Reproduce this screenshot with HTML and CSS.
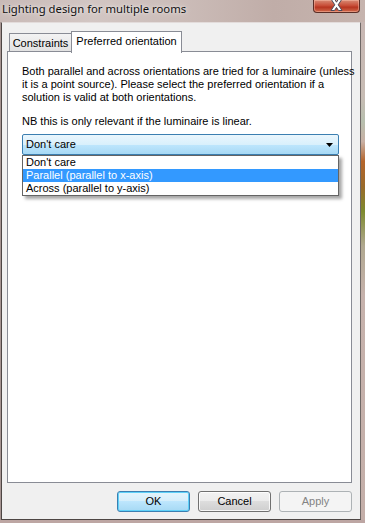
FILE: index.html
```html
<!DOCTYPE html>
<html>
<head>
<meta charset="utf-8">
<link rel="stylesheet" href="styles.css">
</head>
<body>
<div class="window">
  <div class="titlebar">
    <span class="title">Lighting design for multiple rooms</span>
    <div class="close">
      <svg width="47" height="13" viewBox="0 0 47 13">
        <path d="M18 -1 L21.5 -1 L23.5 2.2 L25.5 -1 L29 -1 L25.2 4.8 L29 10.5 L25.5 10.5 L23.5 7.4 L21.5 10.5 L18 10.5 L21.8 4.8 Z" fill="#fff" stroke="#4a4a5a" stroke-width="1"/>
      </svg>
    </div>
  </div>
  <div class="main">
    <div class="frame-left"></div>
    <div class="client">
      <div class="tabs">
        <div class="tab">Constraints</div>
        <div class="tab selected">Preferred orientation</div>
      </div>
      <div class="panel">
        <p class="desc">Both parallel and across orientations are tried for a luminaire (unless<br>it is a point source). Please select the preferred orientation if a<br>solution is valid at both orientations.</p>
        <p class="nb">NB this is only relevant if the luminaire is linear.</p>
        <div class="combo-wrap">
          <div class="combo">
            <span class="combo-text">Don't care</span>
            <svg class="arrow" width="7" height="4" viewBox="0 0 7 4"><path d="M0 0 H7 L3.5 4 Z" fill="#000"/></svg>
          </div>
          <ul class="list">
            <li class="item">Don't care</li>
            <li class="item active">Parallel (parallel to x-axis)</li>
            <li class="item">Across (parallel to y-axis)</li>
          </ul>
        </div>
      </div>
      <div class="buttons">
        <div class="btn default">OK</div>
        <div class="btn">Cancel</div>
        <div class="btn disabled">Apply</div>
      </div>
    </div>
    <div class="frame-right"></div>
  </div>
  <div class="frame-bottom"></div>
</div>
</body>
</html>
```
FILE: styles.css
```css
html, body {
  margin: 0;
  padding: 0;
}
body {
  width: 365px;
  height: 523px;
  overflow: hidden;
  font-family: "Liberation Sans", Arial, sans-serif;
  font-size: 11px;
  color: #000;
}
.window {
  display: flex;
  flex-direction: column;
  height: 523px;
  background: #c3b1ad;
}
.titlebar {
  height: 22px;
  display: flex;
  align-items: flex-start;
  background: linear-gradient(90deg, #c9bab7 0%, #d2c6c3 25%, #cbbcb8 50%, #c0ada8 75%, #c6b4ae 100%);
}
.title {
  font-family: "Noto Sans", sans-serif;
  font-size: 11.3px;
  line-height: 16px;
  margin-top: 1px;
  padding-left: 2px;
  color: #111;
  text-shadow: 0 0 6px rgba(255,255,255,0.7), 0 0 3px rgba(255,255,255,0.6);
}
.close {
  margin-left: auto;
  margin-right: 5px;
  width: 47px;
  height: 13px;
  box-sizing: border-box;
  border: 1px solid #5b2e26;
  border-top: none;
  border-radius: 0 0 4px 4px;
  background: linear-gradient(#d88a74 0%, #c9503a 45%, #b73520 60%, #d06a4c 100%);
  box-shadow: inset 0 0 0 1px rgba(255,200,180,0.45);
  overflow: hidden;
}
.close svg {
  display: block;
  margin-left: -1px;
}
.main {
  display: flex;
  flex: 1;
  min-height: 0;
}
.frame-left {
  width: 1px;
  background: #a69592;
}
.frame-right {
  width: 4px;
  background: linear-gradient(#c8b7b3 0%, #c7bcb4 15%, #b7bfae 20%, #c8b0a4 24%, #b4652c 28%, #9a6a2a 33%, #7e8a2e 38%, #b0a890 45%, #c6b2ac 55%, #c4afa9 100%);
}
.frame-bottom {
  height: 3px;
  background: #bda6a3;
}
.client {
  width: 360px;
  box-sizing: border-box;
  border-left: 1px solid #4d4644;
  border-right: 1px solid #6f6866;
  border-top: 1px solid #e3dcdb;
  border-bottom: 1px solid #4d4644;
  background: #f0f0f0;
  padding: 8px 8px 7px 5px;
  display: flex;
  flex-direction: column;
}
.tabs {
  height: 20px;
  display: flex;
  align-items: flex-end;
  padding-left: 2px;
}
.tab {
  height: 18px;
  width: 63px;
  box-sizing: border-box;
  border: 1px solid #898c95;
  border-bottom: none;
  background: linear-gradient(#f3f3f3, #e2e2e2);
  line-height: 17px;
  padding-top: 1px;
  text-align: center;
}
.tab.selected {
  height: 22px;
  width: 111px;
  margin-left: -1px;
  margin-bottom: -2px;
  background: #fff;
  position: relative;
  z-index: 1;
  line-height: 16px;
  padding-top: 1px;
}
.panel {
  flex: 1;
  min-height: 0;
  background: #fff;
  border: 1px solid #898c95;
  padding: 13px 12px 0 14px;
}
.desc, .nb {
  margin: 0;
  line-height: 13px;
  white-space: nowrap;
}
.nb {
  margin-top: 11px;
}
.combo-wrap {
  position: relative;
  margin-top: 6px;
  width: 317px;
}
.combo {
  height: 21px;
  box-sizing: border-box;
  border: 1px solid #3c7fb1;
  border-radius: 2px;
  background: linear-gradient(#eaf6fd 0%, #d9f0fc 50%, #bee6fd 50%, #a7d9f5 100%);
  display: flex;
  align-items: center;
  padding-left: 3px;
  padding-right: 5px;
}
.combo-text {
  flex: 1;
  line-height: 13px;
}
.arrow {
  display: block;
}
.list {
  position: absolute;
  top: 21px;
  left: 0;
  width: 317px;
  box-sizing: border-box;
  margin: 0;
  padding: 0;
  list-style: none;
  background: #fff;
  border: 1px solid #646464;
  box-shadow: 3px 3px 3px rgba(0,0,0,0.35);
  z-index: 2;
}
.item {
  height: 13px;
  line-height: 13px;
  padding-left: 3px;
}
.item.active {
  background: #3399ff;
  color: #fff;
}
.buttons {
  margin-top: 8px;
  display: flex;
  justify-content: flex-end;
  gap: 8px;
}
.btn {
  width: 73px;
  height: 21px;
  box-sizing: border-box;
  border: 1px solid #707070;
  border-radius: 3px;
  background: linear-gradient(#f2f2f2 0%, #ebebeb 50%, #dddddd 50%, #cfcfcf 100%);
  box-shadow: inset 0 0 0 1px rgba(255,255,255,0.8);
  text-align: center;
  line-height: 19px;
}
.btn.default {
  border-color: #3c7fb1;
  background: linear-gradient(#e5f5fc 0%, #d4eefb 50%, #bde6fd 50%, #a6d9f4 100%);
  box-shadow: inset 0 0 0 1px #5fd1f8;
}
.btn.disabled {
  border-color: #adb2b5;
  background: #f4f4f4;
  box-shadow: none;
  color: #838383;
}
```
